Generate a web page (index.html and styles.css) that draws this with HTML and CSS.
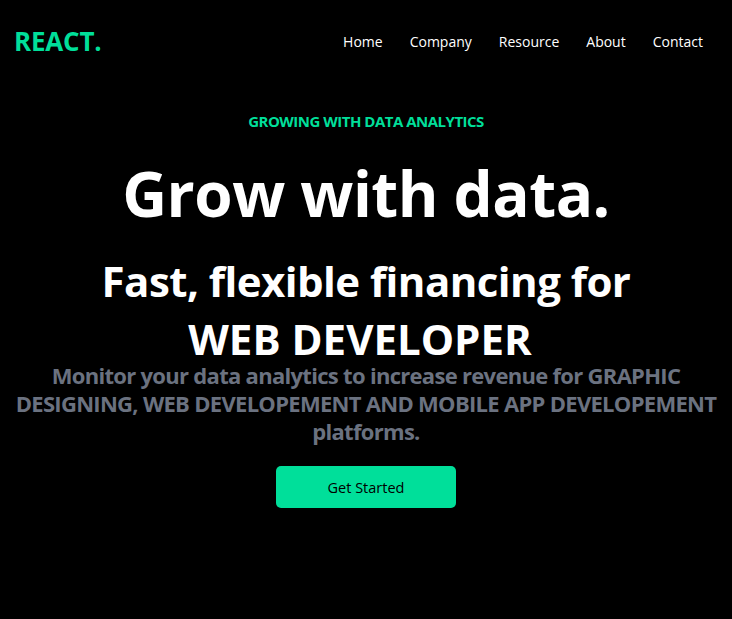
FILE: index.html
```html
<!DOCTYPE html>
<html lang="en">
<head>
<meta charset="utf-8">
<title>REACT.</title>
<link rel="stylesheet" href="styles.css">
</head>
<body>
<header class="nav">
  <h1 class="logo">REACT.</h1>
  <ul class="menu">
    <li>Home</li>
    <li>Company</li>
    <li>Resource</li>
    <li>About</li>
    <li>Contact</li>
  </ul>
</header>
<main class="hero">
  <p class="eyebrow">GROWING WITH DATA ANALYTICS</p>
  <h2 class="title">Grow with data.</h2>
  <div class="sub">
    <p class="sub-lead">Fast, flexible financing for</p>
    <p class="sub-typed">WEB DEVELOPER<span class="cursor"></span></p>
  </div>
  <p class="desc">Monitor your data analytics to increase revenue for GRAPHIC DESIGNING, WEB DEVELOPEMENT AND MOBILE APP DEVELOPEMENT platforms.</p>
  <button class="cta">Get Started</button>
</main>
</body>
</html>
```
FILE: styles.css
```css
* { box-sizing: border-box; }
html, body { margin: 0; padding: 0; background: #000; }
body {
  font-family: "Open Sans", "Noto Sans", sans-serif;
  color: #fff;
  height: 619px;
  overflow: hidden;
}
.nav {
  height: 82px;
  display: flex;
  align-items: center;
  justify-content: space-between;
  padding: 0 29px 0 14px;
}
.logo {
  margin: 0;
  font-size: 26px;
  font-weight: 700;
  color: #00df9a;
  letter-spacing: -0.2px;
}
.menu {
  list-style: none;
  margin: 0;
  padding: 0;
  display: flex;
  gap: 27px;
  font-size: 14px;
}
.hero {
  display: flex;
  flex-direction: column;
  align-items: center;
  text-align: center;
}
.eyebrow {
  margin: 27px 0 0;
  font-size: 15px;
  line-height: 24px;
  font-weight: 700;
  color: #00df9a;
  letter-spacing: -0.5px;
}
.title {
  margin: 23px 0 0;
  font-size: 62px;
  line-height: 74px;
  font-weight: 700;
  letter-spacing: -0.5px;
}
.sub {
  margin: 22px 0 0;
  font-size: 42px;
  font-weight: 700;
}
.sub p { margin: 0; }
.sub-lead {
  line-height: 58px;
  letter-spacing: -0.55px;
}
.sub-typed {
  line-height: 44px;
  padding-top: 7px;
  letter-spacing: 0;
}
.cursor {
  display: inline-block;
  width: 12px;
}
.desc {
  margin: 0;
  font-size: 22px;
  line-height: 28px;
  font-weight: 700;
  color: #6b7280;
  letter-spacing: -0.7px;
}
.cta {
  margin-top: 21px;
  width: 180px;
  height: 42px;
  border: 0;
  border-radius: 5px;
  background: #00df9a;
  color: #000;
  font-family: inherit;
  font-size: 14.5px;
  font-weight: 500;
}
```
